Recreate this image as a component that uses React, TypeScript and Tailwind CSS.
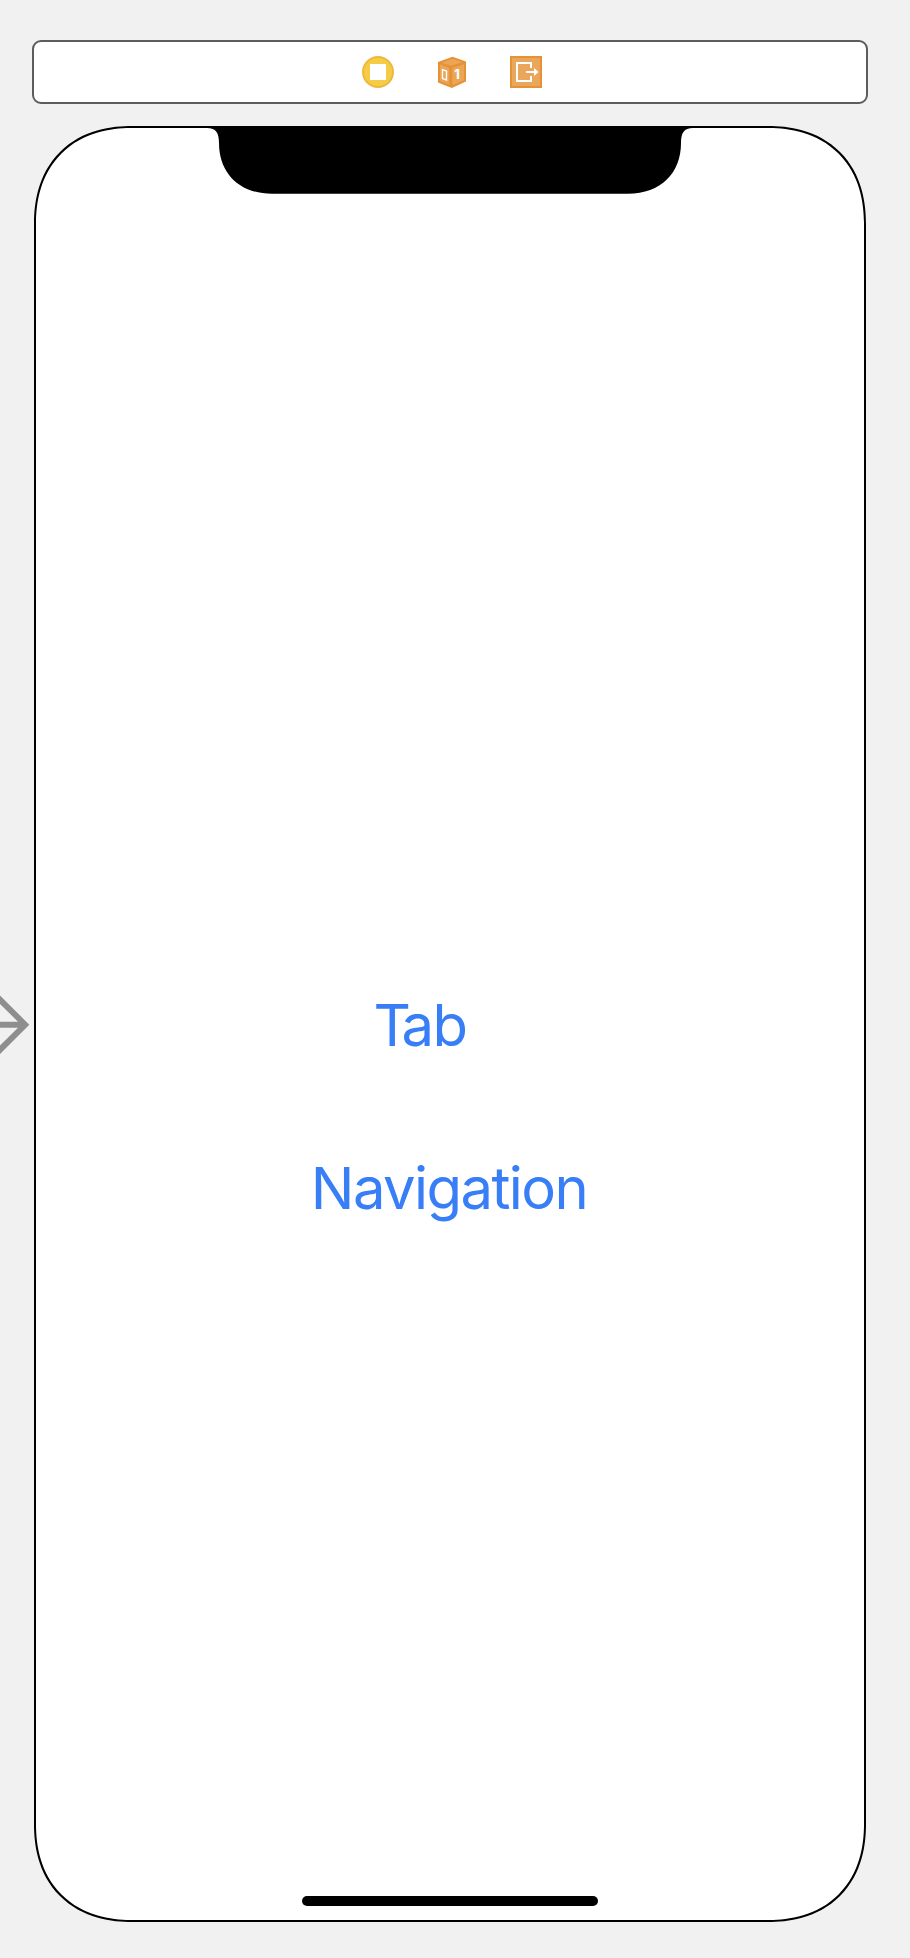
function ControllerIcon() {
  return (
    <svg className="size-8" viewBox="0 0 32 32" aria-hidden="true">
      <circle cx="16" cy="16" r="15" fill="#f5cc46" stroke="#f0b73d" strokeWidth="2" />
      <rect x="8" y="8" width="16" height="16" fill="#fff" />
    </svg>
  );
}

function ResponderIcon() {
  return (
    <svg className="size-8" viewBox="0 0 32 32" aria-hidden="true">
      <path d="M16.500 0.800 30 5.500V25.500L15.800 32 2 26.500V6Z" fill="#e59134" />
      <path d="M16.500 2.800 26.500 6.300 14.800 9.800 5.500 6.800Z" fill="#eaa557" />
      <path d="M4 8.300 13.200 11.700V28.700L4 25Z" fill="#eaa557" />
      <path d="M16.300 11.800 28 8.300V24.300L16.300 29.300Z" fill="#eaa557" />
      <path d="M6.500 13.600 10.500 15V24L6.500 22.600Z" fill="none" stroke="#fff" strokeWidth="1.400" />
      <text x="18.300" y="23.200" fill="#fff" fontFamily="Inter, sans-serif" fontSize="12.500" fontWeight="800">
        1
      </text>
    </svg>
  );
}

function ExitIcon() {
  return (
    <svg className="size-8" viewBox="0 0 32 32" aria-hidden="true">
      <rect x="1" y="1" width="30" height="30" fill="#eaa75b" stroke="#e59237" strokeWidth="2" />
      <path d="M21 12V7H7v18h14v-5" fill="none" stroke="#fff" strokeWidth="2" />
      <path d="M16 16h10" stroke="#fff" strokeWidth="2" />
      <path d="M24 12 28.500 16 24 20Z" fill="#fff" />
    </svg>
  );
}

function Notch() {
  return (
    <svg className="h-[68px] w-[488px]" viewBox="0 0 488 68" aria-hidden="true">
      <path
        d="M0 0H488V2H487C478 2 475 7 475 17C475 47 455 67.700 422 67.700H66C33 67.700 13 47 13 17C13 7 10 2 1 2H0Z"
        fill="#000"
      />
    </svg>
  );
}

export default function App() {
  return (
    <div className="relative flex h-[1958px] w-[910px] flex-col overflow-hidden bg-[#f1f1f1] pt-10 font-['Inter',sans-serif]">
      <header className="ml-8 flex h-16 w-[836px] items-center justify-center gap-[42px] rounded-[9px] border-2 border-[#5d5d5d] bg-white pl-1">
        <ControllerIcon />
        <ResponderIcon />
        <ExitIcon />
      </header>

      <main className="mt-[22px] ml-[34px] flex h-[1796px] w-[832px] flex-col items-center rounded-[98px] border-2 border-black bg-white [corner-shape:superellipse(1.17)]">
        <div className="-mt-0.5 h-[68px]">
          <Notch />
        </div>
        <div className="mt-[796px] flex flex-col items-center text-[58px] leading-[70px] text-[#387ef7]">
          <button type="button" className="mr-[60px] tracking-[-1.6px]">
            <span className="tracking-[-9.5px]">T</span>ab
          </button>
          <button type="button" className="mt-[93px] mr-0.5 tracking-[-1.6px]">
            Navigation
          </button>
        </div>
        <div className="mt-auto mb-3.5 h-2.5 w-[296px] rounded-full bg-black" />
      </main>

      <svg className="absolute top-[980px] left-0 h-[90px] w-8" viewBox="0 0 32 90" aria-hidden="true">
        <path d="M-10 5.500 0 15.500 29.300 44.700 0 74 -10 84V75L0 65.500 18 47.700H-10V41.700H18L0 24 -10 14Z" fill="#8e8e8e" />
      </svg>
    </div>
  );
}
